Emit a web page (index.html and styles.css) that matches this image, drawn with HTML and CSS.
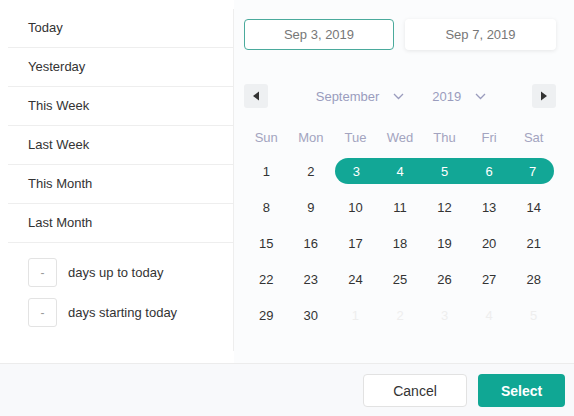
FILE: index.html
```html
<!DOCTYPE html>
<html>
<head>
<meta charset="utf-8">
<link rel="stylesheet" href="styles.css">
</head>
<body>
<div class="picker">
  <div class="main">
    <aside class="sidebar">
      <div class="preset">Today</div>
      <div class="preset">Yesterday</div>
      <div class="preset">This Week</div>
      <div class="preset">Last Week</div>
      <div class="preset">This Month</div>
      <div class="preset">Last Month</div>
      <div class="custom">
        <div class="custom-row"><span class="num-box">-</span><span>days up to today</span></div>
        <div class="custom-row"><span class="num-box">-</span><span>days starting today</span></div>
      </div>
    </aside>
    <section class="calendar">
      <div class="inputs">
        <div class="date-input active">Sep 3, 2019</div>
        <div class="date-input">Sep 7, 2019</div>
      </div>
      <div class="nav">
        <button class="nav-btn"><svg width="8" height="10" viewBox="0 0 8 10"><path d="M7 0.5 L7 9.5 L1 5 Z" fill="#333"/></svg></button>
        <div class="selects">
          <span class="sel">September</span>
          <svg class="chev" width="11" height="7" viewBox="0 0 11 7"><path d="M1 1 L5.5 5.5 L10 1" fill="none" stroke="#9a9cbd" stroke-width="1.3"/></svg>
          <span class="sel year">2019</span>
          <svg class="chev" width="11" height="7" viewBox="0 0 11 7"><path d="M1 1 L5.5 5.5 L10 1" fill="none" stroke="#9a9cbd" stroke-width="1.3"/></svg>
        </div>
        <button class="nav-btn"><svg width="8" height="10" viewBox="0 0 8 10"><path d="M1 0.5 L1 9.5 L7 5 Z" fill="#333"/></svg></button>
      </div>
      <div class="weekdays">
        <span>Sun</span><span>Mon</span><span>Tue</span><span>Wed</span><span>Thu</span><span>Fri</span><span>Sat</span>
      </div>
      <div class="days">
        <div class="day">1</div><div class="day">2</div>
        <div class="day in-range start"><span class="band">3</span></div>
        <div class="day in-range"><span class="band">4</span></div>
        <div class="day in-range"><span class="band">5</span></div>
        <div class="day in-range"><span class="band">6</span></div>
        <div class="day in-range end"><span class="band">7</span></div>
        <div class="day">8</div><div class="day">9</div><div class="day">10</div><div class="day">11</div><div class="day">12</div><div class="day">13</div><div class="day">14</div>
        <div class="day">15</div><div class="day">16</div><div class="day">17</div><div class="day">18</div><div class="day">19</div><div class="day">20</div><div class="day">21</div>
        <div class="day">22</div><div class="day">23</div><div class="day">24</div><div class="day">25</div><div class="day">26</div><div class="day">27</div><div class="day">28</div>
        <div class="day">29</div><div class="day">30</div>
        <div class="day muted">1</div><div class="day muted">2</div><div class="day muted">3</div><div class="day muted">4</div><div class="day muted">5</div>
      </div>
    </section>
  </div>
  <footer class="footer">
    <button class="btn cancel">Cancel</button>
    <button class="btn select">Select</button>
  </footer>
</div>
</body>
</html>
```
FILE: styles.css
```css
* { box-sizing: border-box; }
html, body { margin: 0; padding: 0; background: #fff; }
body {
  font-family: "Liberation Sans", Arial, sans-serif;
  font-size: 13px;
  color: #333;
  width: 574px;
  height: 416px;
  overflow: hidden;
}
.picker { display: flex; flex-direction: column; height: 416px; }
.main { display: flex; height: 363px; }
.sidebar {
  width: 226px;
  margin: 9px 0 12px 8px;
  border-right: 1px solid #eeeeee;
}
.preset {
  height: 39px;
  line-height: 38px;
  border-bottom: 1px solid #eeeeee;
  padding-left: 20px;
  color: #333;
}
.custom { padding: 15px 0 0 20px; display: flex; flex-direction: column; gap: 11px; }
.custom-row { display: flex; align-items: center; gap: 11px; color: #333; }
.num-box {
  width: 29px; height: 29px;
  border: 1px solid #e3e3e3;
  border-radius: 3px;
  display: flex; align-items: center; justify-content: center;
  color: #999; font-size: 12px;
  background: #fff;
}
.calendar {
  flex: 1;
  background: #fbfcfd;
  padding: 19px 18px 0 10px;
}
.inputs { display: grid; grid-template-columns: 150px 151px; gap: 11px; }
.date-input {
  height: 31px;
  border-radius: 4px;
  background: #fff;
  display: flex; align-items: center; justify-content: center;
  color: #777;
  box-shadow: 0 1px 4px rgba(0,0,0,0.09);
}
.date-input.active { border: 1.5px solid #4aaa9c; box-shadow: none; }
.nav {
  margin-top: 34px;
  display: flex; align-items: center; justify-content: space-between;
  height: 24px;
}
.nav-btn {
  width: 24px; height: 24px;
  border: 0; border-radius: 3px;
  background: #eef0f2;
  display: flex; align-items: center; justify-content: center;
  padding: 0;
}
.selects { display: flex; align-items: center; color: #9a9cbd; font-size: 13px; margin-left: 2px; }
.sel.year { margin-left: 28px; }
.chev { margin-left: 14px; }
.weekdays {
  margin-top: 13px;
  display: grid; grid-template-columns: repeat(7, 1fr);
  height: 32px;
  align-items: center;
  text-align: center;
  color: #a3a4c0;
}
.days { display: grid; grid-template-columns: repeat(7, 1fr); }
.day {
  height: 36px;
  display: flex; align-items: center; justify-content: center;
  color: #333;
}
.day.muted { color: #eeeeee; }
.band {
  width: 100%; height: 26px;
  background: #12a796;
  color: #fff;
  display: flex; align-items: center; justify-content: center;
}
.start .band { margin-left: 2px; border-radius: 13px 0 0 13px; }
.end .band { margin-right: 2px; border-radius: 0 13px 13px 0; }
.footer {
  flex: 1;
  border-top: 1px solid #ececec;
  background: #f8f9fb;
  display: flex; justify-content: flex-end; align-items: flex-start;
  gap: 11px;
  padding: 10px 9px 0 0;
}
.btn {
  height: 33px;
  border-radius: 4px;
  font-family: "Liberation Sans", Arial, sans-serif;
  font-size: 14px;
}
.cancel { width: 104px; background: #fff; border: 1px solid #e2e2e2; color: #333; }
.select { width: 87px; background: #10a794; border: 0; color: #fff; font-weight: bold; }
```
